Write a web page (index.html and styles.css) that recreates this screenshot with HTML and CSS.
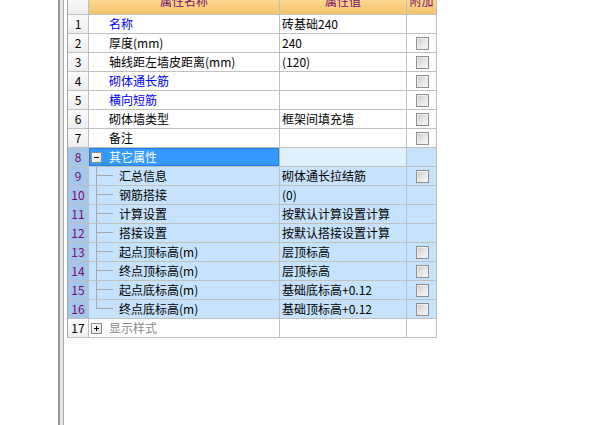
FILE: index.html
```html
<!DOCTYPE html>
<html lang="zh">
<head>
<meta charset="utf-8">
<link rel="stylesheet" href="styles.css">
</head>
<body>
<div class="page">
  <div class="deco">
    <div class="bar-dark"></div>
    <div class="bar-light"></div>
    <div class="bar-mid"></div>
    <div class="bar-white"></div>
  </div>
  <div class="grid">
    <div class="hd num"></div>
    <div class="hd"><span class="hd-text">属性名称</span></div>
    <div class="hd"><span class="hd-text">属性值</span></div>
    <div class="hd"><span class="hd-text">附加</span></div>

    <div class="num">1</div>
    <div class="name blue">名称</div>
    <div class="val">砖基础240</div>
    <div class="att"></div>

    <div class="num">2</div>
    <div class="name">厚度(mm)</div>
    <div class="val">240</div>
    <div class="att"><span class="cb"></span></div>

    <div class="num">3</div>
    <div class="name">轴线距左墙皮距离(mm)</div>
    <div class="val">(120)</div>
    <div class="att"><span class="cb"></span></div>

    <div class="num">4</div>
    <div class="name blue">砌体通长筋</div>
    <div class="val"></div>
    <div class="att"><span class="cb"></span></div>

    <div class="num">5</div>
    <div class="name blue">横向短筋</div>
    <div class="val"></div>
    <div class="att"><span class="cb"></span></div>

    <div class="num">6</div>
    <div class="name">砌体墙类型</div>
    <div class="val">框架间填充墙</div>
    <div class="att"><span class="cb"></span></div>

    <div class="num">7</div>
    <div class="name">备注</div>
    <div class="val"></div>
    <div class="att"><span class="cb"></span></div>

    <div class="num sel">8</div>
    <div class="name group-sel"><span class="box minus"></span>其它属性</div>
    <div class="val group-val"></div>
    <div class="att sel-row"></div>

    <div class="num sel">9</div>
    <div class="name child"><span class="tree"></span>汇总信息</div>
    <div class="val sel-row">砌体通长拉结筋</div>
    <div class="att sel-row"><span class="cb"></span></div>

    <div class="num sel">10</div>
    <div class="name child"><span class="tree"></span>钢筋搭接</div>
    <div class="val sel-row">(0)</div>
    <div class="att sel-row"></div>

    <div class="num sel">11</div>
    <div class="name child"><span class="tree"></span>计算设置</div>
    <div class="val sel-row">按默认计算设置计算</div>
    <div class="att sel-row"></div>

    <div class="num sel">12</div>
    <div class="name child"><span class="tree"></span>搭接设置</div>
    <div class="val sel-row">按默认搭接设置计算</div>
    <div class="att sel-row"></div>

    <div class="num sel">13</div>
    <div class="name child"><span class="tree"></span>起点顶标高(m)</div>
    <div class="val sel-row">层顶标高</div>
    <div class="att sel-row"><span class="cb"></span></div>

    <div class="num sel">14</div>
    <div class="name child"><span class="tree"></span>终点顶标高(m)</div>
    <div class="val sel-row">层顶标高</div>
    <div class="att sel-row"><span class="cb"></span></div>

    <div class="num sel">15</div>
    <div class="name child"><span class="tree"></span>起点底标高(m)</div>
    <div class="val sel-row">基础底标高+0.12</div>
    <div class="att sel-row"><span class="cb"></span></div>

    <div class="num sel">16</div>
    <div class="name child"><span class="tree last"></span>终点底标高(m)</div>
    <div class="val sel-row">基础顶标高+0.12</div>
    <div class="att sel-row"><span class="cb"></span></div>

    <div class="num">17</div>
    <div class="name group gray"><span class="box plus"></span>显示样式</div>
    <div class="val"></div>
    <div class="att"></div>
  </div>
</div>
</body>
</html>
```
FILE: styles.css
```css
html, body {
  margin: 0;
  padding: 0;
  background: #ffffff;
}
body {
  width: 613px;
  height: 425px;
  overflow: hidden;
  font-family: "Noto Sans CJK SC", "Liberation Sans", sans-serif;
  font-size: 12px;
  color: #000;
}
.page {
  display: flex;
  height: 425px;
  padding-left: 58px;
}
.deco {
  display: flex;
  height: 100%;
}
.bar-dark { width: 2px; background: linear-gradient(90deg, #8a8a8a, #a4a4a4); }
.bar-light { width: 3px; background: #e6e6e6; }
.bar-mid { width: 1px; background: #a8a8a8; }
.bar-white { width: 3px; background: #ffffff; }

.grid {
  display: grid;
  grid-template-columns: 21px 191px 127px 30px;
  grid-auto-rows: 19px;
  grid-template-rows: 15px;
  border-left: 1px solid #a4a4a4;
  align-self: flex-start;
}
.grid > div {
  box-sizing: border-box;
  border-right: 1px solid #c0c0c0;
  border-bottom: 1px solid #c0c0c0;
  display: flex;
  align-items: center;
  white-space: nowrap;
  overflow: hidden;
  line-height: 18px;
}
.hd {
  background: linear-gradient(#fbd88e, #f5c46a);
  justify-content: center;
  color: #7a0a6e;
  align-items: flex-start !important;
}
.hd.num {
  background: linear-gradient(#f8f8f8, #ececec);
}
.hd-text {
  display: block;
  line-height: 14px;
  margin-top: -6px;
}
.num {
  justify-content: center;
  background: linear-gradient(#fbfbfb, #eeeeee);
  font-size: 12px;
}
.num.sel {
  background: #a4c6ea;
  color: #7a0a6e;
}
.name {
  padding-left: 20px;
}
.val {
  padding-left: 2px;
}
.att {
  justify-content: center;
}
.blue { color: #0000ff; }
.gray { color: #8a8a8a; }

.group, .group-sel {
  padding-left: 2px;
}
.group-sel {
  background: #3399ff;
  color: #ffffff;
  box-shadow: inset 0 0 0 1px #1f7fe6;
}
.group-val {
  background: #e0f0ff;
}
.sel-row {
  background: #c6e2fc;
}
.child {
  background: #c6e2fc;
  padding-left: 7px;
  align-items: stretch !important;
}
.child .tree {
  position: relative;
  width: 16px;
  margin-right: 6px;
  border-left: 1px solid #a8a8a8;
  flex: none;
}
.child .tree.last {
  height: 9px;
}
.child .tree::after {
  content: "";
  position: absolute;
  left: 0;
  top: 8px;
  width: 16px;
  border-top: 1px solid #a8a8a8;
}
.child .tree.last::after {
  top: 8px;
}
.box {
  position: relative;
  box-sizing: border-box;
  width: 11px;
  height: 11px;
  border: 1px solid #8c8c8c;
  background: linear-gradient(135deg, #ffffff, #e0e0e0);
  margin-right: 7px;
  flex: none;
}
.box::before {
  content: "";
  position: absolute;
  left: 2px;
  top: 4px;
  width: 5px;
  height: 1px;
  background: #000;
}
.box.plus::after {
  content: "";
  position: absolute;
  left: 4px;
  top: 2px;
  width: 1px;
  height: 5px;
  background: #000;
}
.cb {
  box-sizing: border-box;
  display: block;
  width: 13px;
  height: 13px;
  border: 1px solid #8e8e8e;
  background: linear-gradient(135deg, #c4c4c4 0%, #e6e6e6 50%, #f6f6f6 100%);
  box-shadow: inset 1px 1px 0 #f0f0f0;
  margin-left: 1px;
}
```
